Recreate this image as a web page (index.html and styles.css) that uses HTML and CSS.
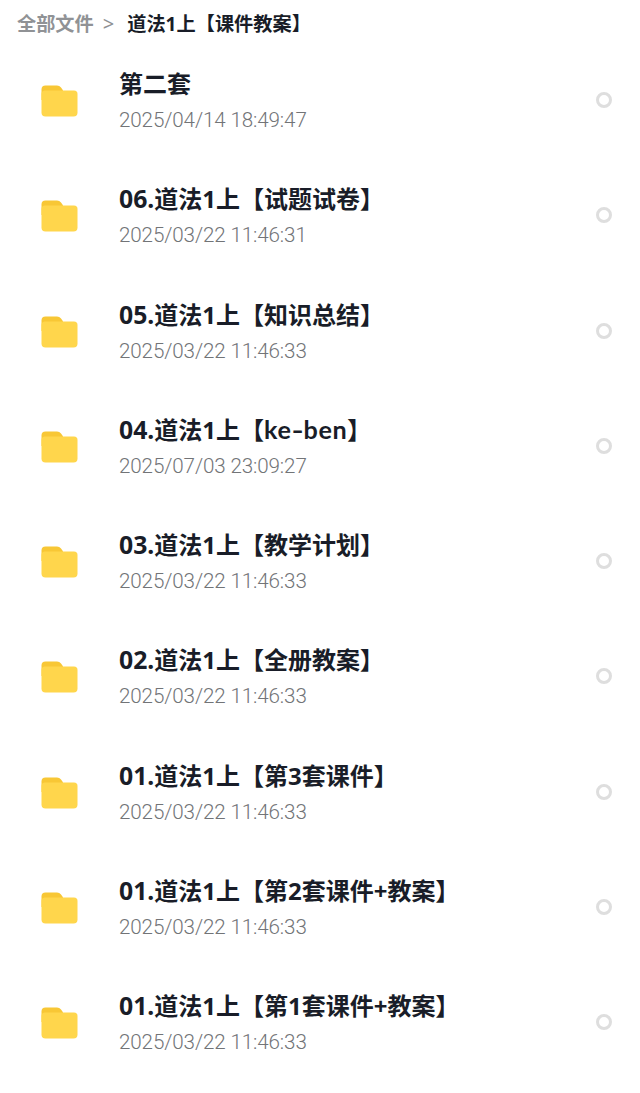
FILE: index.html
```html
<!DOCTYPE html>
<html lang="zh-CN">
<head>
  <meta charset="UTF-8" />
  <meta name="viewport" content="width=device-width, initial-scale=1.0" />
  <title>全部文件</title>
  <link rel="stylesheet" href="styles.css">
</head>
<body>
  <svg class="defs" width="0" height="0">
    <symbol id="folder" viewBox="0 0 36 32">
      <path fill="#f8c735" d="M0 4.5Q0 .5 4 .5H15.5Q18 .5 19.5 2.5L21.5 5.2V15H0Z" />
      <path fill="#ffd64c" d="M0 9Q0 5.5 3.5 5.5H32.5Q36 5.5 36 9V27.5Q36 31.5 32 31.5H4Q0 31.5 0 27.5Z" />
    </symbol>
  </svg>

  <nav class="breadcrumb">
    <span class="crumb">全部文件</span>
    <span class="arrow">&gt;</span>
    <span class="current">道法1上【课件教案】</span>
  </nav>

  <div class="file-list">
    <div class="row">
      <svg class="folder"><use href="#folder" /></svg>
      <div class="info">
        <div class="name">第二套</div>
        <div class="date">2025/04/14 18:49:47</div>
      </div>
      <span class="check"></span>
    </div>
    <div class="row">
      <svg class="folder"><use href="#folder" /></svg>
      <div class="info">
        <div class="name"><span class="num">06.</span>道法1上【试题试卷】</div>
        <div class="date">2025/03/22 11:46:31</div>
      </div>
      <span class="check"></span>
    </div>
    <div class="row">
      <svg class="folder"><use href="#folder" /></svg>
      <div class="info">
        <div class="name"><span class="num">05.</span>道法1上【知识总结】</div>
        <div class="date">2025/03/22 11:46:33</div>
      </div>
      <span class="check"></span>
    </div>
    <div class="row">
      <svg class="folder"><use href="#folder" /></svg>
      <div class="info">
        <div class="name"><span class="num">04.</span>道法1上【<span class="latin">ke<span class="dash">-</span>ben</span>】</div>
        <div class="date">2025/07/03 23:09:27</div>
      </div>
      <span class="check"></span>
    </div>
    <div class="row">
      <svg class="folder"><use href="#folder" /></svg>
      <div class="info">
        <div class="name"><span class="num">03.</span>道法1上【教学计划】</div>
        <div class="date">2025/03/22 11:46:33</div>
      </div>
      <span class="check"></span>
    </div>
    <div class="row">
      <svg class="folder"><use href="#folder" /></svg>
      <div class="info">
        <div class="name"><span class="num">02.</span>道法1上【全册教案】</div>
        <div class="date">2025/03/22 11:46:33</div>
      </div>
      <span class="check"></span>
    </div>
    <div class="row">
      <svg class="folder"><use href="#folder" /></svg>
      <div class="info">
        <div class="name"><span class="num">01.</span>道法1上【第3套课件】</div>
        <div class="date">2025/03/22 11:46:33</div>
      </div>
      <span class="check"></span>
    </div>
    <div class="row">
      <svg class="folder"><use href="#folder" /></svg>
      <div class="info">
        <div class="name"><span class="num">01.</span>道法1上【第2套课件+教案】</div>
        <div class="date">2025/03/22 11:46:33</div>
      </div>
      <span class="check"></span>
    </div>
    <div class="row">
      <svg class="folder"><use href="#folder" /></svg>
      <div class="info">
        <div class="name"><span class="num">01.</span>道法1上【第1套课件+教案】</div>
        <div class="date">2025/03/22 11:46:33</div>
      </div>
      <span class="check"></span>
    </div>
  </div>
</body>
</html>
```
FILE: styles.css
```css
* { box-sizing: border-box; }
body { margin: 0; background: #fff; color: #191d28; font-family: "Noto Sans", "Noto Sans CJK SC", sans-serif; }
.defs { display: block; }
.breadcrumb { display: flex; align-items: center; height: 47px; padding-left: 17px; font-size: 19.2px; line-height: 28px; white-space: nowrap; }
.crumb { color: #909295; font-weight: 700; }
.arrow { color: #8f9194; margin: 0 13px 0 9px; font-size: 20px; }
.current { font-weight: 700; }
.row { display: flex; align-items: center; height: 115.25px; padding: 0 28px 9px 41px; }
.folder { width: 37px; height: 32px; flex: none; margin-top: 2px; }
.info { flex: 1; margin-left: 41px; padding-top: 2px; white-space: nowrap; }
.name { font-size: 24px; font-weight: 700; line-height: 38px; }
.num { font-size: 24.8px; line-height: 1; }
.latin { font-family: Lato, sans-serif; font-size: 25.2px; line-height: 1; letter-spacing: .6px; }
.dash { display: inline-block; margin: 0 1px; transform: scaleX(1.3); }
.date { font-family: Roboto, sans-serif; font-size: 20.6px; font-weight: 300; line-height: 34px; letter-spacing: -.12px; color: #727477; }
.check { width: 16px; height: 16px; flex: none; border: 3px solid #dedede; border-radius: 50%; }
```
